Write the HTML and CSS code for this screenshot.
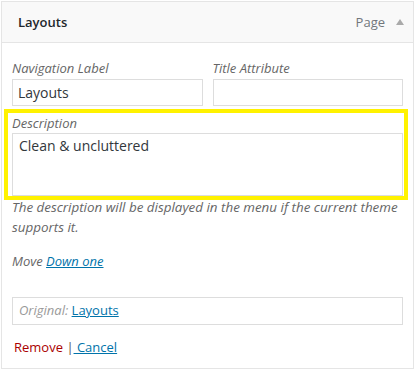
FILE: index.html
```html
<!DOCTYPE html>
<html lang="en">
    <head>
        <meta charset="UTF-8">
        <title>Menu item</title>
        <link rel="stylesheet" href="styles.css">
    </head>

    <body>
        <div class="menu_item">
            <div class="item_bar">
                <span class="item_title">Layouts</span>
                <span class="item_type">Page</span>
                <span class="item_arrow"></span>
            </div>

            <div class="item_settings">
                <div class="row">
                    <div class="field">
                        <label class="field_label">Navigation Label</label>
                        <input class="field_input" type="text" value="Layouts">
                    </div>
                    <div class="field">
                        <label class="field_label">Title Attribute</label>
                        <input class="field_input" type="text" value="">
                    </div>
                </div>

                <div class="highlight">
                    <label class="field_label">Description</label>
                    <textarea class="field_text">Clean &amp; uncluttered</textarea>
                </div>
                <p class="help">The description will be displayed in the menu if the current theme<br>supports it.</p>

                <p class="move">Move <a href="#">Down one</a></p>

                <div class="original">
                    <span class="original_label">Original:</span> <a href="#">Layouts</a>
                </div>

                <div class="actions">
                    <a href="#" class="remove">Remove</a>
                    <span class="sep">|</span><a href="#" class="cancel"> Cancel</a>
                </div>
            </div>
        </div>
    </body>
</html>
```

FILE: styles.css
```css
body {
    margin: 0;
    padding: 1px;
    background-color: white;
    font-family: "Open Sans", sans-serif;
    color: #444;
}
.menu_item {
    box-sizing: border-box;
    width: 413px;
    height: 368px;
    border: 1px solid #e5e5e5;
}
.item_bar {
    display: flex;
    align-items: center;
    height: 40px;
    padding: 0 9px 0 16px;
    background-color: #f9f9f9;
    border-bottom: 1px solid #e5e5e5;
}
.item_title {
    flex: 1;
    font-size: 13px;
    font-weight: 600;
    color: #23282d;
}
.item_type {
    font-size: 13px;
    color: #72777c;
}
.item_arrow {
    margin-left: 11px;
    width: 0;
    height: 0;
    border-left: 4px solid transparent;
    border-right: 4px solid transparent;
    border-bottom: 6px solid #aaa;
}
.item_settings {
    padding: 15px 10px 0 10px;
}
.row {
    display: flex;
    gap: 10px;
}
.field {
    flex: 1;
}
.field_label {
    display: block;
    font-size: 13px;
    font-style: italic;
    line-height: 20px;
    color: #666;
}
.field_input, .field_text {
    display: block;
    box-sizing: border-box;
    width: 100%;
    margin: 0;
    border: 1px solid #ddd;
    font-family: "Open Sans", sans-serif;
    font-size: 14px;
    color: #32373c;
}
.field_input {
    height: 27px;
    margin-top: 1px;
    padding: 0 5px;
}
.highlight {
    margin: 3px -5px 0 -8px;
    padding: 0 1px 0 4px;
    border: 4px solid #fff200;
}
.field_text {
    height: 63px;
    padding: 2px 6px;
    resize: none;
}
.help {
    margin: -3px 0 0 0;
    font-size: 13.4px;
    font-style: italic;
    line-height: 20px;
    color: #666;
    white-space: nowrap;
}
.move {
    margin: 14px 0 0 0;
    font-size: 13px;
    font-style: italic;
    line-height: 20px;
    color: #666;
}
a {
    color: #0073aa;
}
.original {
    margin-top: 26px;
    height: 26px;
    padding-left: 6px;
    border: 1px solid #ddd;
    font-size: 13px;
    line-height: 25px;
}
.original_label {
    font-style: italic;
    color: #999;
}
.actions {
    margin-top: 12px;
    padding-left: 2px;
    font-size: 13px;
    line-height: 20px;
}
.remove {
    color: #a00;
    text-decoration: none;
}
.sep {
    color: #555;
}
```
